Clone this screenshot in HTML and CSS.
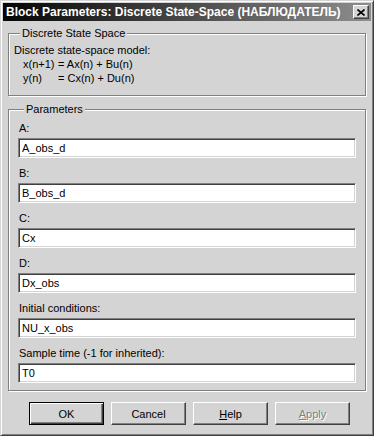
FILE: index.html
```html
<!DOCTYPE html>
<html lang="ru">
<head>
  <meta charset="UTF-8" />
  <title>Block Parameters</title>
  <link rel="stylesheet" href="styles.css">
</head>
<body>

  <div class="window">
    <div class="titlebar">
      <span class="title">Block Parameters: Discrete State-Space (НАБЛЮДАТЕЛЬ)</span>
      <span class="close-btn">
        <svg width="8" height="7" viewBox="0 0 8 7">
          <path d="M0.5 0.5L7.5 6.5M7.5 0.5L0.5 6.5" stroke="#000" stroke-width="1.6" fill="none"/>
        </svg>
      </span>
    </div>

    <div class="content">
      <!-- Descricao do bloco -->
      <fieldset class="group group-desc">
        <legend>Discrete State Space</legend>
        <div class="line">Discrete state-space model:</div>
        <div class="line eq"><span class="lhs">x(n+1)</span>= Ax(n) + Bu(n)</div>
        <div class="line eq"><span class="lhs">y(n)</span>= Cx(n) + Du(n)</div>
      </fieldset>

      <!-- Parametros -->
      <fieldset class="group group-params">
        <legend>Parameters</legend>
        <div class="field">
          <label>A:</label>
          <div class="edit">A_obs_d</div>
        </div>
        <div class="field">
          <label>B:</label>
          <div class="edit">B_obs_d</div>
        </div>
        <div class="field">
          <label>C:</label>
          <div class="edit">Cx</div>
        </div>
        <div class="field">
          <label>D:</label>
          <div class="edit">Dx_obs</div>
        </div>
        <div class="field">
          <label>Initial conditions:</label>
          <div class="edit">NU_x_obs</div>
        </div>
        <div class="field">
          <label>Sample time (-1 for inherited):</label>
          <div class="edit">T0</div>
        </div>
      </fieldset>

      <div class="buttons">
        <div class="btn default">OK</div>
        <div class="btn">Cancel</div>
        <div class="btn"><u>H</u>elp</div>
        <div class="btn disabled"><u>A</u>pply</div>
      </div>
    </div>
  </div>

</body>
</html>
```

FILE: styles.css
```css
* {
  box-sizing: border-box;
}

html, body {
  margin: 0;
  padding: 0;
  background: #fff;
  font-family: "Liberation Sans", Arial, sans-serif;
  font-size: 11px;
  color: #000;
  overflow: hidden;
}

.window {
  width: 374px;
  height: 436px;
  background: #d4d4d4;
  border: 1px solid;
  border-color: #d4d4d4 #404040 #404040 #d4d4d4;
  box-shadow: inset 1px 1px #fff, inset -1px -1px #808080;
  padding: 2px;
  display: flex;
  flex-direction: column;
}

.titlebar {
  height: 18px;
  display: flex;
  align-items: center;
  justify-content: space-between;
  padding: 0 2px 0 3px;
  background: linear-gradient(to right, #050505, #8e8e8e);
}

.title {
  color: #fff;
  font-weight: bold;
  font-size: 12px;
  white-space: nowrap;
}

.close-btn {
  width: 16px;
  height: 14px;
  display: flex;
  align-items: center;
  justify-content: center;
  background: #d4d4d4;
  border: 1px solid;
  border-color: #fff #404040 #404040 #fff;
  box-shadow: inset -1px -1px #808080;
}

.content {
  padding: 5px 5px 0 5px;
}

.group {
  margin: 0;
  border: 1px solid #808080;
  box-shadow: inset 1px 1px #fff, 1px 1px #fff;
}

.group legend {
  margin-left: 6px;
  padding: 0 2px;
  background: #d4d4d4;
  line-height: 14px;
}

.group-desc {
  padding: 3px 5px 10px 5px;
}

.line {
  line-height: 14px;
  white-space: nowrap;
}

.eq {
  padding-left: 9px;
}

.lhs {
  display: inline-block;
  width: 35px;
}

.group-params {
  margin-top: 6px;
  padding: 2px 9px 7px 9px;
}

.field {
  display: flex;
  flex-direction: column;
  gap: 3px;
  margin-top: 8px;
}

.field:first-of-type {
  margin-top: 3px;
}

.field label {
  line-height: 14px;
  padding-left: 1px;
}

.edit {
  height: 20px;
  background: #fff;
  border: 1px solid;
  border-color: #808080 #fff #fff #808080;
  box-shadow: inset 1px 1px #404040, inset -1px -1px #d4d4d4;
  padding: 0 3px;
  line-height: 18px;
}

.buttons {
  display: flex;
  gap: 7px;
  padding-left: 21px;
  margin-top: 11px;
}

.btn {
  width: 75px;
  height: 23px;
  display: flex;
  align-items: center;
  justify-content: center;
  background: #d4d4d4;
  border: 1px solid;
  border-color: #fff #404040 #404040 #fff;
  box-shadow: inset -1px -1px #808080;
}

.btn.default {
  border-color: #000;
  box-shadow: inset 1px 1px #fff, inset -1px -1px #404040, inset -2px -2px #808080;
}

.btn.disabled {
  color: #808080;
  text-shadow: 1px 1px #fff;
}
```
